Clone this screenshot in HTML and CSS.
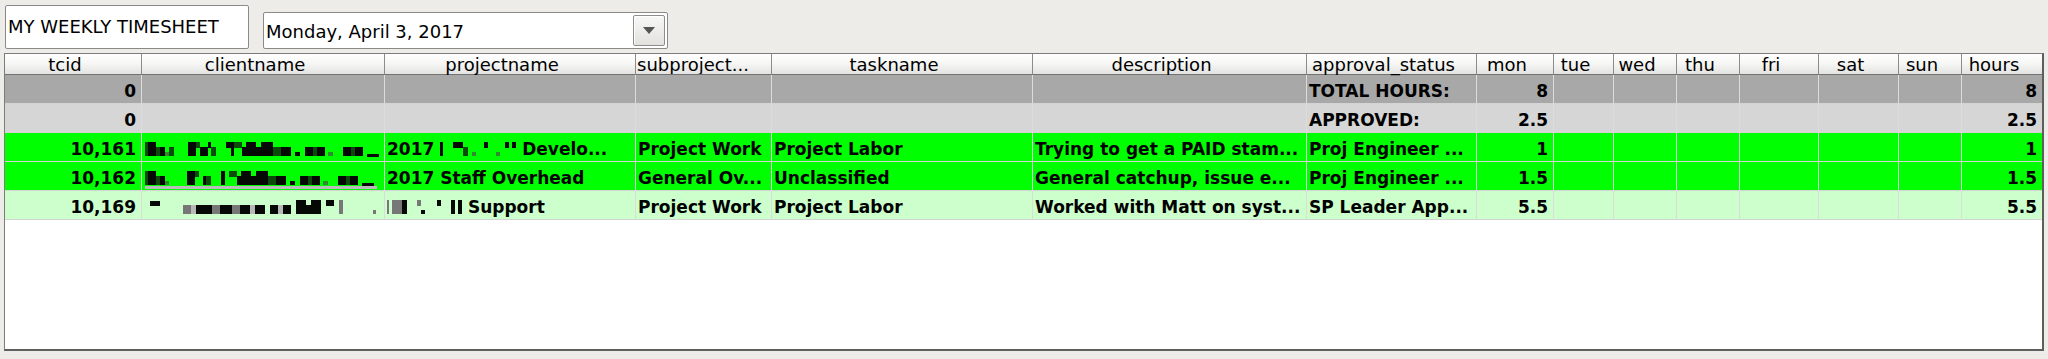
FILE: index.html
```html
<!DOCTYPE html>
<html lang="en">
<head>
    <meta charset="UTF-8">
    <title>My Weekly Timesheet</title>
    <link rel="stylesheet" href="styles.css">
</head>
<body>
    <div class="toolbar">
        <div class="title-field">MY WEEKLY TIMESHEET</div>
        <div class="combo">
            <span class="combo-text">Monday, April 3, 2017</span>
            <span class="combo-btn">
                <svg width="12" height="7" viewBox="0 0 12 7"><polygon points="0,0 12,0 6,7" fill="#555"/></svg>
            </span>
        </div>
    </div>

    <div class="grid-frame">
        <table class="sheet">
            <colgroup>
                <col class="c-tcid"><col class="c-client"><col class="c-project"><col class="c-sub">
                <col class="c-task"><col class="c-desc"><col class="c-status"><col class="c-mon">
                <col class="c-tue"><col class="c-wed"><col class="c-thu"><col class="c-fri">
                <col class="c-sat"><col class="c-sun"><col class="c-hours">
            </colgroup>
            <thead>
                <tr>
                    <th>tcid</th>
                    <th>clientname</th>
                    <th>projectname</th>
                    <th class="th-left">subproject...</th>
                    <th>taskname</th>
                    <th>description</th>
                    <th>approval_status</th>
                    <th>mon</th>
                    <th>tue</th>
                    <th>wed</th>
                    <th>thu</th>
                    <th>fri</th>
                    <th>sat</th>
                    <th>sun</th>
                    <th>hours</th>
                </tr>
            </thead>
            <tbody>
                <tr class="row-total">
                    <td class="num">0</td><td></td><td></td><td></td><td></td><td></td>
                    <td>TOTAL HOURS:</td><td class="num">8</td>
                    <td></td><td></td><td></td><td></td><td></td><td></td>
                    <td class="num">8</td>
                </tr>
                <tr class="row-approved">
                    <td class="num">0</td><td></td><td></td><td></td><td></td><td></td>
                    <td>APPROVED:</td><td class="num">2.5</td>
                    <td></td><td></td><td></td><td></td><td></td><td></td>
                    <td class="num">2.5</td>
                </tr>
                <tr class="row-ok">
                    <td class="num">10,161</td>
                    <td class="rd"><i class="w3 dk"></i><i class="w8"></i><i class="w4 dk lo"></i><i class="w5 lo"></i><i class="w4 md dot"></i><i class="w5 lo dk"></i><i class="w14 gp"></i><i class="w8"></i><i class="w4 hi dk"></i><i class="w8 lo"></i><i class="w3 hi"></i><i class="w5 lo dk"></i><i class="w10 gp"></i><i class="w5 hi"></i><i class="w3"></i><i class="w8 hi dk"></i><i class="w4 lo"></i><i class="w10"></i><i class="w5 lo"></i><i class="w12"></i><i class="w8 lo dk"></i><i class="w10 lo"></i><i class="w4 gp"></i><i class="w5 dot"></i><i class="w5 gp"></i><i class="w8 lo"></i><i class="w4 lo dk"></i><i class="w8 lo"></i><i class="w3 gp"></i><i class="w5 dot md"></i><i class="w10 gp"></i><i class="w8 lo"></i><i class="w4 lo dk"></i><i class="w8 lo"></i><i class="w4 gp"></i><i class="w12 ul"></i></td>
                    <td class="clip">2017 <i class="w3"></i><i class="w10 gp"></i><i class="w10 hi"></i><i class="w5 lo dk"></i><i class="w4 gp"></i><i class="w4 dot md"></i><i class="w8 gp"></i><i class="w4 hi"></i><i class="w8 gp"></i><i class="w4 dot md"></i><i class="w5 gp"></i><i class="w4 hi"></i><i class="w3 gp"></i><i class="w4 hi"></i> Develo...</td>
                    <td>Project Work</td>
                    <td>Project Labor</td>
                    <td>Trying to get a PAID stam...</td>
                    <td>Proj Engineer ...</td>
                    <td class="num">1</td>
                    <td></td><td></td><td></td><td></td><td></td><td></td>
                    <td class="num">1</td>
                </tr>
                <tr class="row-ok">
                    <td class="num">10,162</td>
                    <td class="rd shade"><i class="w3 dk"></i><i class="w8"></i><i class="w4 dk lo"></i><i class="w5 lo"></i><i class="w4 md dot"></i><i class="w18 gp"></i><i class="w8"></i><i class="w4 hi dk"></i><i class="w4 gp"></i><i class="w3 lo"></i><i class="w5 lo dk"></i><i class="w10 gp"></i><i class="w4"></i><i class="w4 gp"></i><i class="w8 hi dk"></i><i class="w4 lo"></i><i class="w10"></i><i class="w5 lo"></i><i class="w12"></i><i class="w8 lo dk"></i><i class="w10 lo"></i><i class="w4 gp"></i><i class="w5 dot"></i><i class="w5 gp"></i><i class="w8 lo"></i><i class="w4 lo dk"></i><i class="w8 lo"></i><i class="w3 gp"></i><i class="w5 dot md"></i><i class="w10 gp"></i><i class="w8 lo"></i><i class="w4 lo dk"></i><i class="w8 lo"></i><i class="w4 gp"></i><i class="w12 ul"></i></td>
                    <td>2017 Staff Overhead</td>
                    <td>General Ov...</td>
                    <td>Unclassified</td>
                    <td>General catchup, issue e...</td>
                    <td>Proj Engineer ...</td>
                    <td class="num">1.5</td>
                    <td></td><td></td><td></td><td></td><td></td><td></td>
                    <td class="num">1.5</td>
                </tr>
                <tr class="row-pending">
                    <td class="num">10,169</td>
                    <td class="rd"><i class="w5 gp"></i><i class="w10 sm"></i><i class="w23 gp"></i><i class="w8 lo gy"></i><i class="w5 lo lg"></i><i class="w16 lo"></i><i class="w8 lo gy"></i><i class="w12 lo"></i><i class="w8 lo gy"></i><i class="w10 lo"></i><i class="w5 lo lg"></i><i class="w10 lo"></i><i class="w5 gp"></i><i class="w8 lo"></i><i class="w5 lo lg"></i><i class="w8 lo"></i><i class="w5 gp"></i><i class="w10"></i><i class="w5 lo"></i><i class="w10"></i><i class="w5 gp"></i><i class="w8 hi"></i><i class="w5 gp"></i><i class="w4 gy"></i><i class="w30 gp"></i><i class="w3 dot gy"></i></td>
                    <td class="clip"><i class="w2 gy"></i><i class="w3 gp"></i><i class="w10 gy"></i><i class="w5"></i><i class="w10 gp"></i><i class="w4 hi gy"></i><i class="w4 dot"></i><i class="w12 gp"></i><i class="w4 hi"></i><i class="w10 gp"></i><i class="w4"></i><i class="w3 gp"></i><i class="w4"></i> Support</td>
                    <td>Project Work</td>
                    <td>Project Labor</td>
                    <td>Worked with Matt on syst...</td>
                    <td>SP Leader App...</td>
                    <td class="num">5.5</td>
                    <td></td><td></td><td></td><td></td><td></td><td></td>
                    <td class="num">5.5</td>
                </tr>
            </tbody>
        </table>
    </div>
</body>
</html>
```

FILE: styles.css
```css
body {
    margin: 0;
    background: #edece8;
    font-family: "DejaVu Sans", "Liberation Sans", sans-serif;
    color: #000;
}
.toolbar {
    display: flex;
    align-items: flex-end;
    padding: 5px 0 0 5px;
}
.title-field {
    box-sizing: border-box;
    width: 244px;
    height: 44px;
    padding-left: 2px;
    background: #fff;
    border: 1px solid #8a8a88;
    border-radius: 2px;
    font-size: 18px;
    line-height: 42px;
    white-space: nowrap;
}
.combo {
    box-sizing: border-box;
    width: 405px;
    height: 37px;
    margin-left: 14px;
    padding: 0 2px 0 2px;
    display: flex;
    align-items: center;
    justify-content: space-between;
    background: #fff;
    border: 1px solid #8a8a88;
    border-radius: 2px;
}
.combo-text {
    font-size: 18px;
    padding-top: 2px;
}
.combo-btn {
    box-sizing: border-box;
    width: 32px;
    height: 31px;
    display: flex;
    align-items: center;
    justify-content: center;
    border: 1px solid #8d8d8b;
    border-radius: 2px;
    background: linear-gradient(#f8f8f7, #e2e1de);
    box-shadow: inset 1px 1px 0 #fff;
}
.grid-frame {
    box-sizing: border-box;
    width: 2040px;
    height: 298px;
    margin: 4px 0 0 4px;
    background: #fff;
    border-top: 1px solid #7c7c7a;
    border-left: 1px solid #7c7c7a;
    border-right: 2px solid #5e5e5c;
    border-bottom: 2px solid #5e5e5c;
    box-shadow: 0 1px 0 #b4b3af;
    overflow: hidden;
}
.sheet {
    table-layout: fixed;
    width: 2037px;
    border-collapse: separate;
    border-spacing: 0;
}
.c-tcid { width: 137px; }
.c-client { width: 243px; }
.c-project { width: 251px; }
.c-sub { width: 136px; }
.c-task { width: 261px; }
.c-desc { width: 274px; }
.c-status { width: 170px; }
.c-mon { width: 77px; }
.c-tue { width: 60px; }
.c-wed { width: 63px; }
.c-thu { width: 63px; }
.c-fri { width: 79px; }
.c-sat { width: 80px; }
.c-sun { width: 63px; }
.c-hours { width: 80px; }

.sheet th {
    box-sizing: border-box;
    height: 21px;
    padding: 1px 16px 0 0;
    font-size: 18px;
    font-weight: normal;
    line-height: 19px;
    text-align: center;
    white-space: nowrap;
    background: linear-gradient(#ffffff, #f7f7f6 45%, #e3e3e1);
    border-right: 1px solid #8c8c8a;
    border-bottom: 1px solid #727270;
}
.sheet th.th-left {
    text-align: left;
    padding: 1px 0 0 1px;
    overflow: hidden;
}
.sheet th:last-child {
    border-right: none;
}
.sheet td {
    box-sizing: border-box;
    height: 29px;
    padding: 4px 2px 0 2px;
    font-size: 17px;
    font-weight: bold;
    line-height: 24px;
    white-space: nowrap;
    overflow: hidden;
    vertical-align: top;
    border-right: 1px solid #dcdcdc;
    border-bottom: 1px solid #d4d4d4;
}
.sheet td:last-child {
    border-right: none;
}
.sheet td.num {
    text-align: right;
    padding-right: 5px;
}
.row-total td { background: #a8a8a8; }
.row-approved td { background: #d6d6d6; }
.row-ok td { background: #00ff00; }
.row-pending td { background: #ccffcc; }

/* pixelated (redacted) names */
.sheet i {
    display: inline-block;
    height: 14px;
    width: 6px;
    vertical-align: -1px;
    background: #060806;
}
.sheet td.rd {
    padding-left: 3px;
}
.sheet td.shade {
    background: linear-gradient(#b9bab9, #b9bab9) no-repeat 3px 24px / 232px 3px, #00ff00;
}
.sheet i.w2 { width: 2px; }
.sheet i.w3 { width: 3px; }
.sheet i.w4 { width: 4px; }
.sheet i.w5 { width: 5px; }
.sheet i.w8 { width: 8px; }
.sheet i.w10 { width: 10px; }
.sheet i.w12 { width: 12px; }
.sheet i.w14 { width: 14px; }
.sheet i.w16 { width: 16px; }
.sheet i.w18 { width: 18px; }
.sheet i.w23 { width: 23px; }
.sheet i.w30 { width: 30px; }
.sheet i.lo { height: 9px; }
.sheet i.hi { height: 6px; margin-bottom: 8px; }
.sheet i.sm { height: 5px; margin-bottom: 8px; }
.sheet i.dot { height: 4px; }
.sheet i.ul { height: 3px; vertical-align: -2px; }
.sheet i.dk { background: #0c4a0c; }
.sheet i.md { background: #2f8a2f; }
.sheet i.gy { background: #777; }
.sheet i.lg { background: #b8b8b8; }
.sheet i.gp { background: transparent; }
```
